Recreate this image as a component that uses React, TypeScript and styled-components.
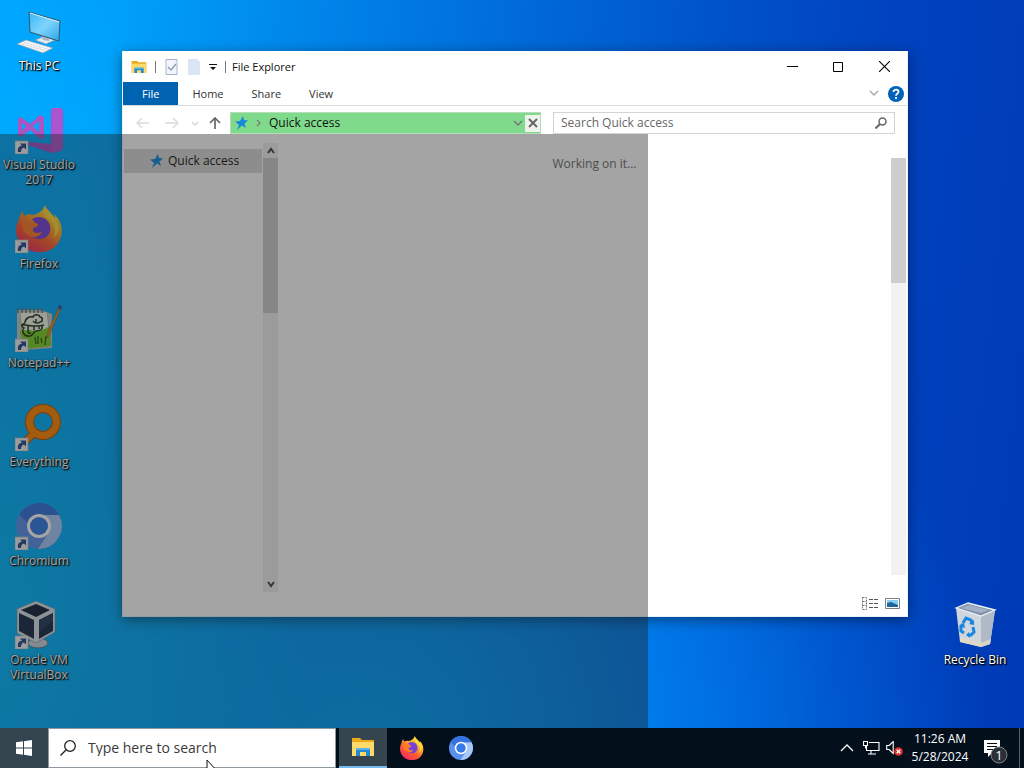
import React from "react";
import styled, { createGlobalStyle } from "styled-components";

const GlobalStyle = createGlobalStyle`
  *, *::before, *::after { box-sizing: border-box; }
  body {
    margin: 0;
    overflow: hidden;
    font-family: "Open Sans", "Noto Sans", sans-serif;
    font-size: 12px;
    line-height: 16px;
    color: #111;
  }
  button, input { font: inherit; color: inherit; }
  button { background: none; border: 0; padding: 0; }
  ul { list-style: none; margin: 0; padding: 0; }
  svg { display: block; flex: none; }
`;

const Screen = styled.div`
  display: flex;
  flex-direction: column;
  height: 100vh;
`;

const Desktop = styled.main`
  position: relative;
  flex: 1;
  min-height: 0;
  background:
    radial-gradient(ellipse 30% 90% at 0% 85%, rgba(0, 188, 255, 0.85), rgba(0, 180, 255, 0.5) 60%, transparent),
    radial-gradient(ellipse 60% 85% at 36% 104%, rgba(0, 168, 255, 0.9), rgba(0, 145, 255, 0.6) 50%, transparent),
    linear-gradient(96deg, #00a5ff 0, #00a0fa 11%, #0086ea 28%, #006edb 45%, #0052c8 66%, #0042be 82%, #003ab6 100%);
`;

const IconGrid = styled.ul`
  display: grid;
  grid-template-columns: 78px 78px;
  grid-template-rows: repeat(7, 99px);
  justify-content: space-between;
  height: 100%;
  && { padding: 7px 10px 0 0; }
`;

const IconCell = styled.li<{ $column?: number; $row: number }>`
  grid-column: ${(p) => p.$column ?? 1};
  grid-row: ${(p) => p.$row};
`;

const Shortcut = styled.button`
  display: flex;
  flex-direction: column;
  align-items: center;
  gap: 3px;
  width: 100%;
  color: #fff;
  line-height: 15px;
  text-shadow: 1px 1px 2px #000, 1px 1px 1px #000, 0 0 2px rgba(0, 0, 0, 0.6);
`;

const Window = styled.section`
  position: absolute;
  top: 51px;
  right: 116px;
  bottom: 111px;
  left: 122px;
  display: flex;
  flex-direction: column;
  background: #fff;
  border: 1px solid #e8f2fa;
  border-top-width: 0;
  box-shadow: 0 3px 12px rgba(0, 0, 0, 0.45);
`;

const TitleBar = styled.header`
  display: flex;
  align-items: center;
  height: 31px;
  padding-left: 8px;
`;

const Tools = styled.div`
  display: flex;
  align-items: center;
  gap: 8px;
`;

const Divider = styled.span`
  width: 1px;
  height: 12px;
  background: #777;
`;

const Title = styled.h1`
  flex: 1;
  margin: 0 0 0 6px;
  font-size: 11px;
  font-weight: 400;
`;

const CaptionButton = styled.button`
  display: grid;
  place-items: center;
  width: 46px;
  height: 31px;
`;

const Ribbon = styled.nav`
  display: flex;
  align-items: center;
  height: 24px;
  border-bottom: 1px solid #dcdcdc;
`;

const Tab = styled.button<{ $active?: boolean }>`
  height: 23px;
  padding: ${(p) => (p.$active ? "0 19px" : "0 14px")};
  color: ${(p) => (p.$active ? "#fff" : "#333")};
  background: ${(p) => (p.$active ? "#0063b1" : "transparent")};
  font-size: 11px;
`;

const RibbonEnd = styled.div`
  display: flex;
  align-items: center;
  gap: 9px;
  margin-left: auto;
  padding-right: 3px;
`;

const AddressRow = styled.div`
  display: grid;
  grid-template-columns: 95px minmax(0, 311fr) minmax(0, 342fr);
  column-gap: 12px;
  align-items: center;
  height: 28px;
  padding: 6px 12px 0 0;
`;

const History = styled.div`
  display: grid;
  grid-template-columns: 29px 29px 17px 24px;
  justify-items: center;
  padding-left: 5px;
`;

const AddressBar = styled.div`
  display: flex;
  align-items: center;
  height: 22px;
  padding: 0 0 0 4px;
  background: #7fdb8b;
  border: 1px solid #b7dcbc;
`;

const Crumb = styled.button`
  display: flex;
  align-items: center;
  gap: 8px;
  margin-right: auto;
`;

const StopButton = styled.button`
  display: grid;
  place-items: center;
  width: 15px;
  height: 17px;
  margin-left: 2px;
  background: #eef3ee;
`;

const SearchField = styled.label`
  display: flex;
  align-items: center;
  height: 22px;
  padding: 0 7px;
  border: 1px solid #d4d4d4;
`;

const TextInput = styled.input`
  flex: 1;
  min-width: 0;
  padding: 0;
  border: 0;
  outline: 0;
  background: none;
  &::placeholder { color: #666; opacity: 1; }
`;

const Body = styled.div`
  display: flex;
  flex: 1;
  min-height: 0;
`;

const Sidebar = styled.aside`
  display: flex;
  gap: 1px;
  padding: 9px 0 24px 1px;
`;

const SideItem = styled.button`
  display: flex;
  align-items: center;
  gap: 5px;
  width: 138px;
  height: 24px;
  margin-top: 6px;
  padding-left: 26px;
  background: #d9d9d9;
`;

const SideScroll = styled.div`
  display: flex;
  flex-direction: column;
  justify-content: space-between;
  width: 15px;
  background: #f0f0f0;
`;

const Track = styled.div`
  flex: 1;
`;

const Thumb = styled.div<{ $share: string }>`
  width: 100%;
  height: ${(p) => p.$share};
  background: #cdcdcd;
`;

const Arrow = styled.button`
  display: grid;
  place-items: center;
  width: 15px;
  height: 15px;
`;

const Files = styled.div`
  display: flex;
  flex: 1;
  flex-direction: column;
  min-width: 0;
`;

const FileArea = styled.div`
  display: flex;
  flex: 1;
  min-height: 0;
  padding: 24px 1px 0 0;
`;

const Loading = styled.p`
  flex: 1;
  margin: 0;
  padding-left: 20px;
  text-align: center;
  color: #6d6d6d;
  line-height: 12px;
`;

const FileScroll = styled.div`
  width: 15px;
  background: #f2f2f2;
`;

const StatusBar = styled.footer`
  display: flex;
  align-items: center;
  justify-content: flex-end;
  gap: 6px;
  height: 41px;
  padding: 16px 7px 0 0;
`;

const Shade = styled.div`
  position: absolute;
  top: 134px;
  right: 376px;
  bottom: 0;
  left: 0;
  pointer-events: none;
  background: rgba(32, 34, 32, 0.41);
`;

const Taskbar = styled.footer`
  display: flex;
  height: 40px;
  background: #03101c;
  color: #fff;
`;

const TaskButton = styled.button<{ $lit?: boolean; $open?: boolean }>`
  display: grid;
  place-items: center;
  width: ${(p) => (p.$lit ? 48 : 49)}px;
  height: 40px;
  background: ${(p) => (p.$lit ? "#34454f" : "transparent")};
  border-bottom: ${(p) => (p.$open ? "2px solid #76b9ed" : "0")};
`;

const TaskSearch = styled.label`
  display: flex;
  align-items: center;
  gap: 12px;
  width: 288px;
  margin-right: 3px;
  padding: 0 11px;
  border: 1px solid #8f989e;
  background: #fff;
  color: #222;
  font-size: 14px;
  & input::placeholder { color: #3a3a3a; }
`;

const Tray = styled.div`
  display: flex;
  align-items: center;
  margin-left: auto;
`;

const TrayButton = styled.button<{ $width: number; $low?: boolean }>`
  display: grid;
  place-items: center;
  width: ${(p) => p.$width}px;
  height: 40px;
  padding-top: ${(p) => (p.$low ? 6 : 0)}px;
`;

const Clock = styled.button`
  width: 66px;
  line-height: 18px;
  text-align: center;
`;

const ShowDesktop = styled.button`
  width: 5px;
  height: 40px;
  border-left: 1px solid #56606a;
`;

const Pointer = styled.svg`
  position: fixed;
  top: 760px;
  left: 206px;
`;

const Badge = () => (
  <g>
    <rect x="0" y="35" width="13" height="13" fill="#f2f2f2" stroke="#b8bcc4" strokeWidth=".7" />
    <path d="M3 46c-.6-4 1-6 4-6.200L5 37.500h6v6l-2-2c-2 .5-3 2-3 4.500z" fill="#244c92" />
  </g>
);

const PcIcon = () => (
  <svg width="48" height="48" viewBox="0 0 48 48">
    <defs>
      <linearGradient id="pc" x1="0" y1="0" x2="1" y2="1">
        <stop offset="0" stopColor="#37b6f6" /><stop offset=".5" stopColor="#7fd4fb" /><stop offset="1" stopColor="#2aa3ea" />
      </linearGradient>
    </defs>
    <path d="M20 33l8-3 12 3-9 4z" fill="#e4eaf0" stroke="#8795a3" strokeWidth=".6" />
    <path d="M26 28l8 2v4l-6-1z" fill="#aab5c0" />
    <path d="M14 5l31 9-1 20-29-9z" fill="url(#pc)" stroke="#35586e" strokeWidth="1" />
    <path d="M15 6l29 9" stroke="#cdeeff" strokeWidth="1" />
    <path d="M2 37l9-4 27 8-10 5z" fill="#f3f6f8" stroke="#8c9aa7" strokeWidth=".7" />
    <path d="M7 37l24 7M9 35.500l25 7" stroke="#b5bfc8" strokeWidth=".7" strokeDasharray="2 1" />
  </svg>
);

const StudioIcon = () => (
  <svg width="48" height="48" viewBox="0 0 48 48">
    <path d="M36 4l2-2h8l2 2v38l-2 3-9 2-24-8 2-3 21 2z" fill="#a54fc8" />
    <path d="M37 3h10v40l-10 3z" fill="#ad55cf" />
    <path fillRule="evenodd" d="M3 13l3-2 9 7L25 9l4 2v21l-4 1-10-9-9 7-3-2zM7 17v7l4-3.500zM24 15l-6 5.500 6 5.500z" fill="#ab54c4" />
    <Badge />
  </svg>
);

const FirefoxIcon = ({ size = 48, id }: { size?: number; id: string }) => (
  <svg width={size} height={size} viewBox={size === 48 ? "0 0 48 48" : "1 0 47 47"}>
    <defs>
      <linearGradient id={id} x1=".85" y1="0" x2=".2" y2="1">
        <stop offset="0" stopColor="#fff04c" /><stop offset=".35" stopColor="#ffae25" />
        <stop offset=".65" stopColor="#ff5a30" /><stop offset="1" stopColor="#f2246f" />
      </linearGradient>
    </defs>
    <path d="M30 0c1 4 6 7 10 13 0-2 0-3-1-4 9 8 10 20 4 29-7 11-24 12-34 4C0 34-1 23 4 14c0-3 2-6 4-8 0 2 0 4 1 5 3-2 6-2 9-1 5-1 10-4 12-10z" fill={`url(#${id})`} />
    <path d="M17 14c6-4 14-2 17 4 4 8-1 16-10 16-6 0-10-4-11-8 1-4 4-7 8-7-1-2-3-3-4-5z" fill="#7542d8" />
    <path d="M7 17c5-3 9 0 13 1 4 0 4 3 1 4-3 0-4 3-2 5 3 2 6 0 8 0-2 5-9 7-14 3-5-3-7-8-6-13z" fill="#ff7b27" />
    <path d="M30 2c-2 6 0 9 5 13 6 6 6 13 3 18 8-5 7-14 2-20C36 8 31 6 30 2z" fill="#ffdf3e" opacity=".8" />
    {size === 48 && <Badge />}
  </svg>
);

const NotepadIcon = () => (
  <svg width="48" height="48" viewBox="0 0 48 48">
    <path d="M2 6h24l11 4v34l-29 2-6-5z" fill="#c5c7c1" />
    <path d="M5 8h27l4 34-27 3z" fill="#f5f7ee" stroke="#999" strokeWidth=".5" />
    <path d="M5 27c10-3 20 3 30-5l1 20-27 3z" fill="#79cf24" />
    <path d="M3 4v5M7 4v5M11 4v5M15 4v5M19 4v5M23 4v5M27 4v5" stroke="#68706f" strokeWidth="1.400" />
    <path d="M10 19c0-5 5-7 8-6 1-3 6-3 7 0 3 0 3 5 0 5-2 2-6 1-7-1M10 19c-3 1-4 4-1 5-3 3 0 9 6 8 3 0 3-4 6-5 5 0 8-3 5-6M6 21c6-1 13 3 23 0M13 22v4M19 22v4M24 22v3M21 15v3M14 26c-2 2-1 4 2 3" fill="none" stroke="#22391c" strokeWidth="1.500" />
    <path d="M20 33l1 7M23 32v8M26 34l1 5M31 32l-1 9" fill="none" stroke="#2f6414" strokeWidth="1.400" />
    <path d="M44 3l2 1-12 28-2 2v-4z" fill="#dd902d" stroke="#7d522b" strokeWidth=".5" />
    <path d="M43 2l3-1 1 3-3 2z" fill="#3c4ea0" />
    <Badge />
  </svg>
);

const EverythingIcon = () => (
  <svg width="48" height="48" viewBox="0 0 48 48">
    <path d="M18 31L6 43" stroke="#b65400" strokeWidth="8" />
    <circle cx="28" cy="19" r="13.500" fill="none" stroke="#b65400" strokeWidth="9" />
    <path d="M18 31L6 43" stroke="#ff8500" strokeWidth="6" />
    <circle cx="28" cy="19" r="13.500" fill="none" stroke="#ff8500" strokeWidth="7" />
    <Badge />
  </svg>
);

const ChromiumIcon = ({ size = 48 }: { size?: number }) => (
  <svg width={size} height={size} viewBox={size === 48 ? "0 0 48 48" : "1 1 46 46"}>
    <circle cx="24" cy="24" r="23" fill="#5b91ee" />
    <path d="M24 13h20a23 23 0 0 1-21 34l11-17c3-6 1-13-10-17z" fill="#a8c7fa" />
    <path d="M4 13C14-4 37-2 44 13H24c-6 0-9 3-11 8z" fill="#3473df" />
    <circle cx="24" cy="24" r="12" fill="#fff" />
    <circle cx="24" cy="24" r="9" fill="#347be9" />
    {size === 48 && <Badge />}
  </svg>
);

const VirtualBoxIcon = () => (
  <svg width="48" height="48" viewBox="0 0 48 48">
    <ellipse cx="23" cy="42" rx="10" ry="5" fill="#c7d1dd" stroke="#63758c" />
    <path d="M21 0L40 8v23L21 42 2 32V8z" fill="#dce3eb" stroke="#7f8ea1" strokeWidth=".6" />
    <path d="M21 3l14 6-14 7L6 9z" fill="#18233a" />
    <path d="M4 12l15 7v19L4 30zM38 12v18l-14 8V19z" fill="#192b4a" />
    <path d="M24 19l14-7v8L24 31z" fill="#26395a" />
    <Badge />
  </svg>
);

const BinIcon = () => (
  <svg width="48" height="48" viewBox="0 0 48 48">
    <path d="M5 7l25 7 14-5-5 34-9 3L9 41z" fill="#cfd6de" />
    <path d="M30 14l14-5-5 34-9 3z" fill="#b0bac7" />
    <path d="M5 7l12-5 27 7-14 6z" fill="#7e91ac" stroke="#eef3f8" strokeWidth="1.300" />
    <path d="M10 7l8-3 20 5-8 3z" fill="#a3b1c4" />
    <path d="M9 36l21 6 10-4-1 5-9 3-21-5z" fill="#e2dac2" opacity=".8" />
    <path d="M12 22l3-5 5 2 1 4M22 26l1 5-3 3h-3M13 32l-3-2 0-5 2-2" fill="none" stroke="#1686df" strokeWidth="3" />
    <path d="M18 23l5 1 0-5zM18 31l-3 3 4 3zM8 25l5-3 1 5z" fill="#1686df" />
  </svg>
);

const FolderIcon = ({ size = 24 }: { size?: number }) => (
  <svg width={size} height={size} viewBox="0 0 24 24">
    <path d="M1 3h8l2 2h12v16H1z" fill="#e9a91b" />
    <path d="M1 7h22v14H1z" fill="#ffda69" />
    <path d="M5 13h14v8h-4v-4H9v4H5z" fill="#258bd1" />
    <path d="M5 13h14v2H5z" fill="#59b2e8" />
  </svg>
);

const Star = () => (
  <svg width="13" height="14" viewBox="0 0 13 14">
    <path d="M8 0l1 4 4 .5-3.500 3L11 12 7 9.500 2 14l2-5-4-3.500 5-.5z" fill="#1689dc" />
  </svg>
);

const Chevron = ({ d = "M1 1l4 4 4-4", color = "#777", w = 10, h = 7, thick = 1.5 }: { d?: string; color?: string; w?: number; h?: number; thick?: number }) => (
  <svg width={w} height={h} viewBox={`0 0 ${w} ${h}`}>
    <path d={d} fill="none" stroke={color} strokeWidth={thick} />
  </svg>
);

const desktopIcons = [
  { name: "This PC", art: <PcIcon /> },
  { name: "Visual Studio 2017", art: <StudioIcon /> },
  { name: "Firefox", art: <FirefoxIcon id="fx-desktop" /> },
  { name: "Notepad++", art: <NotepadIcon /> },
  { name: "Everything", art: <EverythingIcon /> },
  { name: "Chromium", art: <ChromiumIcon /> },
  { name: "Oracle VM VirtualBox", art: <VirtualBoxIcon /> },
];

const Explorer = () => (
  <Window aria-label="File Explorer">
    <TitleBar>
      <Tools>
        <FolderIcon size={16} />
        <Divider />
        <button aria-label="Properties">
          <svg width="15" height="16" viewBox="0 0 15 16">
            <path d="M2 .5h11v15H2z" fill="#f2f6fc" stroke="#a7b5cb" />
            <path d="M4 8l3 3 5-6" fill="none" stroke="#8b9bb8" strokeWidth="1.500" />
          </svg>
        </button>
        <button aria-label="New folder">
          <svg width="14" height="16" viewBox="0 0 14 16">
            <path d="M1 0h10v2h2v14H1z" fill="#dce5f5" />
          </svg>
        </button>
        <button aria-label="Customize toolbar">
          <svg width="8" height="8" viewBox="0 0 8 8"><path d="M0 1h8v1H0zM1 4h6L4 7z" fill="#111" /></svg>
        </button>
        <Divider />
      </Tools>
      <Title>File Explorer</Title>
      <CaptionButton aria-label="Minimize"><Chevron d="M0 5.500h11" color="#000" w={11} h={11} thick={1} /></CaptionButton>
      <CaptionButton aria-label="Maximize"><Chevron d="M.5.5h9v9h-9z" color="#000" w={10} h={10} thick={1} /></CaptionButton>
      <CaptionButton aria-label="Close"><Chevron d="M0 0l11 11M11 0L0 11" color="#000" w={11} h={11} thick={1.1} /></CaptionButton>
    </TitleBar>
    <Ribbon aria-label="Ribbon">
      <Tab $active>File</Tab>
      <Tab>Home</Tab>
      <Tab>Share</Tab>
      <Tab>View</Tab>
      <RibbonEnd>
        <button aria-label="Expand the ribbon"><Chevron color="#aaa" /></button>
        <button aria-label="Help">
          <svg width="16" height="16" viewBox="0 0 16 16">
            <circle cx="8" cy="8" r="8" fill="#0063b8" />
            <path d="M5.500 6c0-3.500 5.500-3 5 0-.2 1.500-2.500 1.700-2.500 3.800M8 11v2" fill="none" stroke="#fff" strokeWidth="1.800" />
          </svg>
        </button>
      </RibbonEnd>
    </Ribbon>
    <AddressRow>
      <History>
        <button aria-label="Back"><Chevron d="M13 6H1M6 1L1 6l5 5" color="#dcdcdc" w={14} h={12} /></button>
        <button aria-label="Forward"><Chevron d="M0 6h12M8 1l5 5-5 5" color="#dcdcdc" w={14} h={12} /></button>
        <button aria-label="Recent locations"><Chevron d="M1 1l3 3 3-3" color="#d8d8d8" w={8} h={5} /></button>
        <button aria-label="Up"><Chevron d="M6 12V1M1 6l5-5 5 5" color="#666" w={12} h={12} thick={1.7} /></button>
      </History>
      <AddressBar>
        <Crumb>
          <Star />
          <Chevron d="M1 1l3 3-3 3" w={5} h={8} thick={1.2} />
          <span>Quick access</span>
        </Crumb>
        <button aria-label="Previous locations"><Chevron /></button>
        <StopButton aria-label="Stop loading"><Chevron d="M1 1l8 8M9 1L1 9" color="#666" w={10} h={10} thick={2} /></StopButton>
      </AddressBar>
      <SearchField>
        <TextInput aria-label="Search Quick access" placeholder="Search Quick access" />
        <svg width="12" height="12" viewBox="0 0 12 12">
          <circle cx="7.500" cy="4.500" r="3.500" fill="none" stroke="#666" strokeWidth="1.500" />
          <path d="M5 7l-4.500 4.500" stroke="#666" strokeWidth="2" />
        </svg>
      </SearchField>
    </AddressRow>
    <Body>
      <Sidebar>
        <SideItem><Star />Quick access</SideItem>
        <SideScroll>
          <Arrow aria-label="Scroll up"><Chevron d="M1 6l3-4 3 4" color="#444" w={8} h={7} thick={2} /></Arrow>
          <Track><Thumb $share="37%" /></Track>
          <Arrow aria-label="Scroll down"><Chevron d="M1 1l3 4 3-4" color="#444" w={8} h={7} thick={2} /></Arrow>
        </SideScroll>
      </Sidebar>
      <Files>
        <FileArea>
          <Loading>Working on it...</Loading>
          <FileScroll><Thumb $share="30%" /></FileScroll>
        </FileArea>
        <StatusBar>
          <button aria-label="Details view">
            <svg width="17" height="13" viewBox="0 0 17 13">
              <path d="M.5.5h4v12h-4zM.5 4.500h4M.5 8.500h4" fill="none" stroke="#777" strokeDasharray="2 1" />
              <path d="M7 2.500h4M12 2.500h4M7 6.500h4M12 6.500h4M7 10.500h4M12 10.500h4" stroke="#555" />
            </svg>
          </button>
          <button aria-label="Large icons view">
            <svg width="15" height="11" viewBox="0 0 15 11">
              <path d="M.5.5h14v10H.5z" fill="#fff" stroke="#78828b" />
              <path d="M2 2h11v7H2z" fill="#86ccf3" />
              <path d="M2 5l4-1 7 3v2H2z" fill="#23659b" />
            </svg>
          </button>
        </StatusBar>
      </Files>
    </Body>
  </Window>
);

export default function App() {
  return (
    <Screen>
      <GlobalStyle />
      <Desktop>
        <IconGrid>
          {desktopIcons.map((icon, i) => (
            <IconCell key={icon.name} $row={i + 1}>
              <Shortcut>{icon.art}<span>{icon.name}</span></Shortcut>
            </IconCell>
          ))}
          <IconCell $column={2} $row={7}>
            <Shortcut><BinIcon /><span>Recycle Bin</span></Shortcut>
          </IconCell>
        </IconGrid>
        <Explorer />
        <Shade />
      </Desktop>
      <Taskbar>
        <TaskButton $lit aria-label="Start">
          <svg width="16" height="16" viewBox="0 0 16 16">
            <path d="M0 2.300l7-1v6.200H0zM8 1.200L16 0v7.500H8zM0 8.500h7v6.200l-7-1zM8 8.500h8V16l-8-1.200z" fill="#fff" />
          </svg>
        </TaskButton>
        <TaskSearch>
          <svg width="16" height="16" viewBox="0 0 16 16">
            <circle cx="10" cy="6" r="5.300" fill="none" stroke="#222" strokeWidth="1.300" />
            <path d="M6.200 9.800L.5 15.500" stroke="#222" strokeWidth="1.300" />
          </svg>
          <TextInput aria-label="Type here to search" placeholder="Type here to search" />
        </TaskSearch>
        <TaskButton $lit $open aria-label="File Explorer"><FolderIcon /></TaskButton>
        <TaskButton aria-label="Firefox"><FirefoxIcon size={24} id="fx-task" /></TaskButton>
        <TaskButton aria-label="Chromium"><ChromiumIcon size={24} /></TaskButton>
        <Tray>
          <TrayButton $width={26} aria-label="Show hidden icons"><Chevron d="M1 7l6-6 6 6" color="#fff" w={14} h={8} thick={1.3} /></TrayButton>
          <TrayButton $width={22} aria-label="Network">
            <svg width="17" height="14" viewBox="0 0 17 14">
              <path d="M6 1.500h10v8H3.500V5M8 10v3M5 13h8M.5.5h4v4h-4zM2.500 4.500v3" fill="none" stroke="#fff" strokeWidth="1.100" />
            </svg>
          </TrayButton>
          <TrayButton $width={25} aria-label="Volume muted">
            <svg width="17" height="15" viewBox="0 0 17 15">
              <path d="M.7 4.500h2.500l4-4v12l-4-4H.7z" fill="none" stroke="#fff" strokeWidth="1.100" />
              <circle cx="12.500" cy="10.500" r="4.300" fill="#df2d2d" />
              <path d="M10.700 8.700l3.600 3.600M14.300 8.700l-3.600 3.600" stroke="#fff" strokeWidth="1.300" />
            </svg>
          </TrayButton>
          <Clock>11:26 AM<br />5/28/2024</Clock>
          <TrayButton $width={46} $low aria-label="1 new notification">
            <svg width="26" height="26" viewBox="0 0 26 26">
              <path d="M1 2h16v13H9l-4 4v-4H1z" fill="#fff" />
              <path d="M4 5.500h10M4 8.500h10M4 11.500h7" stroke="#03101c" />
              <circle cx="16" cy="17" r="8" fill="#2a3036" stroke="#7c8185" />
              <text x="16" y="22" textAnchor="middle" fontSize="13" fill="#fff">1</text>
            </svg>
          </TrayButton>
          <ShowDesktop aria-label="Show desktop" />
        </Tray>
      </Taskbar>
      <Pointer width="12" height="18" viewBox="0 0 12 18">
        <path d="M1 0v15l3.500-3.500L7 17l2-1-2.300-5H11z" fill="#fff" stroke="#111" />
      </Pointer>
    </Screen>
  );
}
